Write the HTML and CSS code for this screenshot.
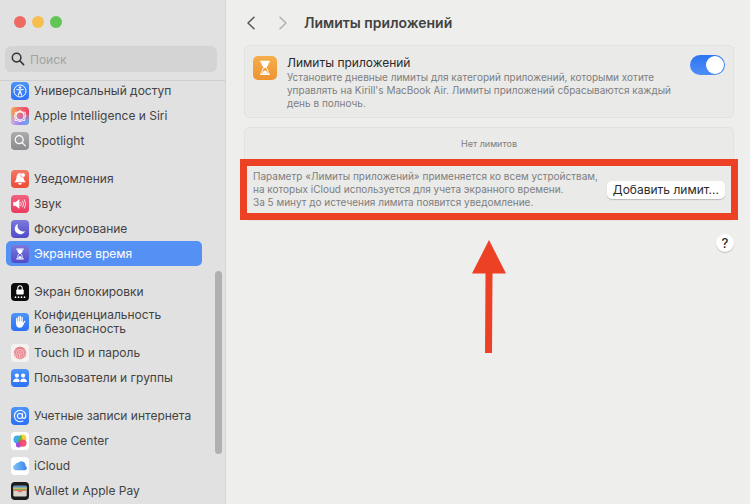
FILE: index.html
```html
<!DOCTYPE html>
<html lang="ru">
<head>
  <meta charset="UTF-8">
  <title>Лимиты приложений</title>
  <link rel="stylesheet" href="styles.css">
</head>
<body>

  <aside class="sidebar">
    <div class="sidebar-top">
      <div class="lights">
        <span class="light red"></span>
        <span class="light yellow"></span>
        <span class="light green"></span>
      </div>
      <label class="search">
        <svg viewBox="0 0 14 14" width="14" height="14" fill="none" stroke="#333" stroke-width="1.5" stroke-linecap="round"><circle cx="5.6" cy="5.6" r="4.3"/><path d="M8.8 8.8l3.8 3.8"/></svg>
        <input type="search" placeholder="Поиск" aria-label="Поиск">
      </label>
    </div>

    <nav class="menu">
      <ul class="group">
        <li><a class="item" href="#">
          <svg class="icon" viewBox="0 0 18 18"><defs><linearGradient id="blue" x2="0" y2="1"><stop stop-color="#4c94fa"/><stop offset="1" stop-color="#2b71f4"/></linearGradient></defs><rect width="18" height="18" rx="4" fill="url(#blue)"/><circle cx="9" cy="9" r="6" fill="none" stroke="#fff"/><circle cx="9" cy="5.6" r="1.2" fill="#fff"/><path d="M5.9 7.5l3.1.5 3.1-.5M9 8v2.200M8.600 9.800l-1.300 3.400M9.400 9.800l1.300 3.400" fill="none" stroke="#fff" stroke-width="1.100" stroke-linecap="round"/></svg>
          <span>Универсальный доступ</span></a></li>
        <li><a class="item" href="#">
          <svg class="icon" viewBox="0 0 18 18"><defs><linearGradient id="siriTop"><stop stop-color="#f5a94c"/><stop offset=".5" stop-color="#ee6a6c"/><stop offset="1" stop-color="#ee3f6a"/></linearGradient><linearGradient id="siriBottom"><stop stop-color="#c9b4ea"/><stop offset=".5" stop-color="#a07ef0"/><stop offset="1" stop-color="#4fb5f8"/></linearGradient><linearGradient id="siriFade" x2="0" y2="1"><stop offset=".3" stop-color="#000"/><stop offset=".85" stop-color="#fff"/></linearGradient><mask id="siriMask"><rect width="18" height="18" fill="url(#siriFade)"/></mask></defs><rect width="18" height="18" rx="4" fill="url(#siriTop)"/><rect width="18" height="18" rx="4" fill="url(#siriBottom)" mask="url(#siriMask)"/><g fill="none" stroke="#fff" stroke-width="1.1"><circle cx="9" cy="9" r="4.1"/><path d="M9 3.4l2.3 1.7 2.8.2.2 2.7L15 9l-1.2 1.8.1 2.6-2.6.3L9 14.8l-2.3-1.1-2.6-.3.1-2.6L3.4 9l.8-1.4.1-2.3 2.5-.2z" stroke-width=".9" stroke-linejoin="round"/></g></svg>
          <span>Apple Intelligence и Siri</span></a></li>
        <li><a class="item" href="#">
          <svg class="icon" viewBox="0 0 18 18"><defs><linearGradient id="gray" x2="0" y2="1"><stop stop-color="#acacae"/><stop offset="1" stop-color="#8b8b8e"/></linearGradient></defs><rect width="18" height="18" rx="4" fill="url(#gray)"/><g fill="none" stroke="#fff" stroke-width="1.2" stroke-linecap="round"><circle cx="8.2" cy="7.7" r="4"/><path d="M11.1 10.7l3.2 3.2"/></g></svg>
          <span>Spotlight</span></a></li>
      </ul>

      <ul class="group">
        <li><a class="item" href="#">
          <svg class="icon" viewBox="0 0 18 18"><defs><linearGradient id="orangeRed" x2="0" y2="1"><stop stop-color="#f37866"/><stop offset="1" stop-color="#ee4b36"/></linearGradient></defs><rect width="18" height="18" rx="4" fill="url(#orangeRed)"/><path d="M9 3.100C6.500 3.300 5.700 5.200 5.500 7.500c-.1 2.200-.8 3-2.100 4.800h11.200c-1.300-1.800-1.900-2.600-2.100-4.800C12.300 5.200 11.500 3.300 9 3.100zM7.200 13.100a1.800 1.800 0 0 0 3.600 0z" fill="#fff"/><circle cx="12" cy="5.100" r="2.300" fill="#fff" stroke="#f26c5a" stroke-width=".6"/></svg>
          <span>Уведомления</span></a></li>
        <li><a class="item" href="#">
          <svg class="icon" viewBox="0 0 18 18"><defs><linearGradient id="pink" x2="0" y2="1"><stop stop-color="#f0617f"/><stop offset="1" stop-color="#ec3b5e"/></linearGradient></defs><rect width="18" height="18" rx="4" fill="url(#pink)"/><path d="M2.500 7.300h2.300L8.200 4.600v8.800L4.800 10.700H2.500z" fill="#fff" stroke="#fff" stroke-width=".5" stroke-linejoin="round"/><path d="M9.900 7.300q1 1.700 0 3.400M11.700 6q1.800 3 0 6M13.500 4.800q2.600 4.200 0 8.400" fill="none" stroke="#fff" stroke-width=".8" stroke-linecap="round"/></svg>
          <span>Звук</span></a></li>
        <li><a class="item" href="#">
          <svg class="icon" viewBox="0 0 18 18"><defs><linearGradient id="purple" x2="0" y2="1"><stop stop-color="#7d79dd"/><stop offset="1" stop-color="#504bc8"/></linearGradient></defs><rect width="18" height="18" rx="4" fill="url(#purple)"/><path d="M7 3.600a5.600 5.600 0 1 0 7.400 7.500A5.700 5.700 0 0 1 7 3.600z" fill="#fff"/></svg>
          <span>Фокусирование</span></a></li>
        <li><a class="item active" href="#" aria-current="page">
          <svg class="icon" viewBox="0 0 18 18"><rect width="18" height="18" rx="4" fill="url(#purple)"/><path d="M5.300 3.500h7.400v1.300H5.300zM5.300 13.200h7.400v1.300H5.300zM6.200 5h5.600q0 2.300-2 4h-1.600q-2-1.700-2-4z" fill="#fff"/><path d="M8.300 8.600q-1.700 1.300-1.700 4.300M9.700 8.600q1.700 1.300 1.700 4.300" fill="none" stroke="#fff" stroke-width=".8"/><path d="M7.200 13q.3-1.300 1.800-1.900 1.500.6 1.800 1.900z" fill="#fff"/></svg>
          <span>Экранное время</span></a></li>
      </ul>

      <ul class="group">
        <li><a class="item" href="#">
          <svg class="icon" viewBox="0 0 18 18"><rect width="18" height="18" rx="4" fill="#0b0b0b"/><rect x="5.300" y="6.400" width="7.400" height="5.200" rx=".8" fill="#fff"/><path d="M6.800 7V5a2.200 2.200 0 0 1 4.400 0V7" fill="none" stroke="#fff" stroke-width="1.100"/><g fill="#fff"><circle cx="4.500" cy="14.200" r=".85"/><circle cx="7.500" cy="14.200" r=".85"/><circle cx="10.500" cy="14.200" r=".85"/><circle cx="13.500" cy="14.200" r=".85"/></g></svg>
          <span>Экран блокировки</span></a></li>
        <li><a class="item tall" href="#">
          <svg class="icon" viewBox="0 0 18 18"><rect width="18" height="18" rx="4" fill="url(#blue)"/><g fill="none" stroke="#fff" stroke-width="1.300" stroke-linecap="round"><path d="M5.700 9.500V5.400M7.500 8.500V3.800M9.300 8.500V3.300M11.100 9V4.500M11.600 11.500l2.100-3.100"/></g><path d="M5.050 8.500h6.700v1.800l1.300-.6q-.9 5-4.300 5-3.700 0-3.700-4.200z" fill="#fff"/></svg>
          <span>Конфиденциальность<br>и безопасность</span></a></li>
        <li><a class="item" href="#">
          <svg class="icon" viewBox="0 0 18 18"><rect width="18" height="18" rx="4" fill="#f4f3f2"/><circle cx="9" cy="9" r="6.300" fill="#f5c6c9"/><g fill="none" stroke="#e2707c" stroke-width=".8" stroke-linecap="round"><path d="M4.300 5.200a6.100 6.100 0 0 1 9.400 0M3.200 8.500a5.900 5.900 0 0 1 11.600.8M3.600 11.800Q4.600 9.800 4.600 8.800a4.400 4.400 0 0 1 8.800 0q0 2.500-.8 4.800M5.300 13.600Q6.300 11 6.200 9a2.800 2.800 0 0 1 5.600 0q0 3.200-1.300 5.700M7 14.700Q8 12 7.800 9a1.200 1.200 0 0 1 2.400 0q0 3-1.300 6M14.800 11.200l-.4 1"/></g></svg>
          <span>Touch ID и пароль</span></a></li>
        <li><a class="item" href="#">
          <svg class="icon" viewBox="0 0 18 18"><rect width="18" height="18" rx="4" fill="url(#blue)"/><g fill="#fff"><circle cx="5.900" cy="6.600" r="2.100"/><circle cx="12.100" cy="6.600" r="2.100"/><path d="M2 13q.2-3.600 3.700-3.600 2.200 0 3 1.700-.5.800-.6 1.900zM9.100 13q.2-3.600 3.400-3.600T16 13z"/></g></svg>
          <span>Пользователи и группы</span></a></li>
      </ul>

      <ul class="group">
        <li><a class="item" href="#">
          <svg class="icon" viewBox="0 0 18 18"><rect width="18" height="18" rx="4" fill="url(#blue)"/><g fill="none" stroke="#fff" stroke-width="1.100" stroke-linecap="round"><circle cx="8.900" cy="9" r="2.500"/><path d="M11.500 6.500v3.400q0 1.500 1.400 1.500 1.900-.2 1.900-2.900A5.700 5.700 0 1 0 9 14.700q1.700 0 2.900-.7"/></g></svg>
          <span>Учетные записи интернета</span></a></li>
        <li><a class="item" href="#">
          <svg class="icon" viewBox="0 0 18 18"><rect width="18" height="18" rx="4" fill="#fff"/><circle cx="11.500" cy="6.300" r="3.900" fill="#f7cf3c"/><circle cx="6.500" cy="7.400" r="4" fill="#3fa9f0"/><path d="M9.600 2.900a4 4 0 0 1 .9 4.700 4 4 0 0 1-2.600 3.300 4 4 0 0 1-.3-4.300 4 4 0 0 1 2-3.700z" fill="#55b848"/><circle cx="7.600" cy="12.800" r="2.700" fill="#a24be0"/><circle cx="11.900" cy="11.100" r="3.700" fill="#ee4265" opacity=".9"/></svg>
          <span>Game Center</span></a></li>
        <li><a class="item" href="#">
          <svg class="icon" viewBox="0 0 18 18"><defs><linearGradient id="cloud"><stop stop-color="#7cc4f8"/><stop offset="1" stop-color="#3f82ec"/></linearGradient></defs><rect width="18" height="18" rx="4" fill="#fff"/><path d="M4.700 13.300a2.800 2.800 0 0 1-.6-5.500 2.300 2.300 0 0 1 2.800-1.700 4.200 4.200 0 0 1 7.600 2.800 2.300 2.300 0 0 1-.5 4.400z" fill="url(#cloud)"/></svg>
          <span>iCloud</span></a></li>
        <li><a class="item" href="#">
          <svg class="icon" viewBox="0 0 18 18"><rect width="18" height="18" rx="4" fill="#1c1c1c"/><rect x="2.300" y="3.700" width="13.400" height="10.800" rx="1.200" fill="#d9d5cd"/><path d="M2.300 5q0-1.300 1.300-1.300h10.800q1.300 0 1.300 1.300v.7H2.300z" fill="#4e94c4"/><path d="M2.300 5.700h13.400v1.200H2.300z" fill="#e5b349"/><path d="M2.300 6.900h13.400v1.200H2.300z" fill="#6fac6b"/><path d="M2.300 8.100h13.400v.9H12q-.9 0-1.200.8-1.800 1.400-3.600 0-.3-.8-1.200-.8H2.300z" fill="#e4705f"/></svg>
          <span>Wallet и Apple Pay</span></a></li>
      </ul>
    </nav>
    <div class="scrollbar"></div>
  </aside>

  <main class="content">
    <header class="title-bar">
      <button class="nav-button" type="button" aria-label="Назад">
        <svg viewBox="0 0 10 14" width="10" height="14"><path d="M8 1.200L2 7l6 5.800"/></svg>
      </button>
      <button class="nav-button" type="button" aria-label="Вперед" disabled>
        <svg viewBox="0 0 10 14" width="10" height="14"><path d="M2 1.200L8 7l-6 5.800"/></svg>
      </button>
      <h1>Лимиты приложений</h1>
    </header>

    <section class="card intro">
      <svg class="big-icon" viewBox="0 0 24 24"><defs><linearGradient id="orange" x2="0" y2="1"><stop stop-color="#f5ae4c"/><stop offset="1" stop-color="#ef9330"/></linearGradient></defs><rect width="24" height="24" rx="5" fill="url(#orange)"/><path d="M7.300 4.800h9.400v1.600H7.300zM7.300 17.200h9.400v1.700H7.300zM8.200 6.500h7.600q0 3.300-2.600 5.400h-2.400q-2.600-2.100-2.600-5.400z" fill="#fff"/><path d="M11 11.500q-2.200 1.900-2.200 5.600M13 11.500q2.200 1.900 2.200 5.600" fill="none" stroke="#fff"/><path d="M9.500 17.200q.4-1.900 2.500-2.600 2.100.7 2.500 2.600z" fill="#fff"/></svg>
      <div class="intro-text">
        <label for="limits">Лимиты приложений</label>
        <p class="note">Установите дневные лимиты для категорий приложений, которыми хотите управлять на Kirill's MacBook Air. Лимиты приложений сбрасываются каждый день в полночь.</p>
      </div>
      <input class="switch" type="checkbox" role="switch" id="limits" checked>
    </section>

    <section class="card">
      <p class="note empty">Нет лимитов</p>
      <div class="add-row">
        <p class="note">Параметр «Лимиты приложений» применяется ко всем устройствам,<br>на которых iCloud используется для учета экранного времени.<br>За 5 минут до истечения лимита появится уведомление.</p>
        <button class="add-button" type="button">Добавить лимит...</button>
        <div class="highlight"></div>
        <svg class="arrow" viewBox="0 0 34 113" width="34" height="113"><path d="M17 0l17 33.500H20.500L20 113h-7l.5-79.500H0z" fill="#ec4125"/></svg>
      </div>
    </section>

    <div class="help-row">
      <button class="help" type="button" aria-label="Справка">?</button>
    </div>
  </main>

</body>
</html>
```
FILE: styles.css
```css
* {
  box-sizing: border-box;
}

body {
  margin: 0;
  height: 100vh;
  display: flex;
  overflow: hidden;
  font-family: Inter, "Noto Sans", sans-serif;
  font-size: 12px;
  color: #434343;
  background-color: #eeeeec;
}

p, h1, ul {
  margin: 0;
  padding: 0;
}

button, input {
  font-family: inherit;
}

.sidebar {
  position: relative;
  flex: none;
  width: 226px;
  display: flex;
  flex-direction: column;
  background-color: #e1e1e1;
  border-right: 1px solid #d5d5d5;
}

.sidebar-top {
  padding: 16px 8px 8px 5px;
  border-bottom: 1px solid #cfcfcf;
}

.lights {
  display: flex;
  gap: 6px;
  padding-left: 9px;
  margin-bottom: 18px;
}

.light {
  width: 12px;
  height: 12px;
  border-radius: 50%;
}

.red {
  background-color: #ed6b60;
}

.yellow {
  background-color: #f5bf4f;
}

.green {
  background-color: #61c555;
}

.search {
  display: flex;
  align-items: center;
  gap: 5px;
  height: 26px;
  padding: 0 6px;
  border-radius: 6px;
  background-color: #d4d4d4;
}

.search input {
  flex: 1;
  min-width: 0;
  padding: 0;
  border: none;
  outline: none;
  background: none;
  font-size: 12px;
}

.search input::placeholder {
  color: #a3a3a3;
}

.menu {
  flex: 1;
  min-height: 0;
  overflow: hidden;
}

.group {
  list-style: none;
  margin-bottom: 13px;
}

.group:first-child {
  margin-top: -3px;
}

.item {
  display: flex;
  align-items: center;
  gap: 5px;
  height: 25px;
  margin: 0 23px 0 6px;
  padding: 0 5px;
  border-radius: 5px;
  line-height: 14px;
  white-space: nowrap;
  color: inherit;
  text-decoration: none;
}

.item.tall {
  height: 36px;
}

.item.active {
  background-color: #5591f5;
  color: #fff;
}

.icon {
  flex: none;
  width: 18px;
  height: 18px;
}

.scrollbar {
  position: absolute;
  top: 271px;
  right: 3px;
  width: 7px;
  height: 183px;
  border-radius: 4px;
  background-color: #b0b0b0;
}

.content {
  flex: 1;
  min-width: 0;
  padding: 0 16px 0 18px;
}

.title-bar {
  display: flex;
  align-items: center;
  gap: 22px;
  height: 45px;
  padding-left: 2px;
}

.title-bar h1 {
  margin-left: -6px;
  font-size: 14px;
  font-weight: 600;
}

.nav-button {
  display: flex;
  padding: 0;
  border: none;
  background: none;
}

.nav-button path {
  fill: none;
  stroke: #555;
  stroke-width: 1.5;
  stroke-linecap: round;
  stroke-linejoin: round;
}

.nav-button:disabled path {
  stroke: #b0b0b0;
}

.card {
  margin-bottom: 9px;
  border: 1px solid #e2e2e1;
  border-radius: 5px;
  background-color: #eaeae9;
}

.intro {
  display: flex;
  align-items: flex-start;
  gap: 10px;
  padding: 9px 8px 7px;
}

.big-icon {
  flex: none;
  width: 24px;
  height: 24px;
  margin-top: 1px;
}

.intro-text {
  flex: 1;
}

.intro-text label {
  display: block;
  line-height: 16px;
  color: #2b2b2b;
}

.note {
  font-size: 10px;
  line-height: 13px;
  color: #7e7e7e;
}

.switch {
  appearance: none;
  flex: none;
  display: flex;
  width: 35px;
  height: 20px;
  margin: 0;
  padding: 1px;
  border-radius: 10px;
  background-color: #c8c8c8;
}

.switch::before {
  content: "";
  width: 18px;
  height: 18px;
  border-radius: 50%;
  background-color: #fff;
}

.switch:checked {
  justify-content: flex-end;
  background-image: linear-gradient(#2f74f2, #4c8ff8);
}

.empty {
  padding: 9px 0;
  font-size: 9px;
  text-align: center;
}

.add-row {
  position: relative;
  display: flex;
  align-items: center;
  justify-content: space-between;
  padding: 11px 8px;
}

.add-button {
  flex: none;
  height: 18px;
  padding: 0 6px;
  border: none;
  border-radius: 5px;
  font-size: 12px;
  line-height: 18px;
  color: #2b2b2b;
  background-color: #fff;
  box-shadow: 0 1px 1px rgba(0, 0, 0, 0.2);
}

/* red frame and arrow pointing at the add button row */
.highlight {
  position: absolute;
  inset: 0 -5px;
  border: 7px solid #ec4125;
  pointer-events: none;
}

.arrow {
  position: absolute;
  top: 100%;
  left: 50%;
  margin-top: 20px;
  transform: translateX(-50%);
}

.help-row {
  display: flex;
  justify-content: flex-end;
  margin-top: 13px;
}

.help {
  width: 18px;
  height: 18px;
  padding: 0;
  border: none;
  border-radius: 50%;
  font-size: 13px;
  font-weight: 500;
  line-height: 18px;
  color: #2b2b2b;
  background-color: #fff;
  box-shadow: 0 1px 1px rgba(0, 0, 0, 0.2);
}
```
